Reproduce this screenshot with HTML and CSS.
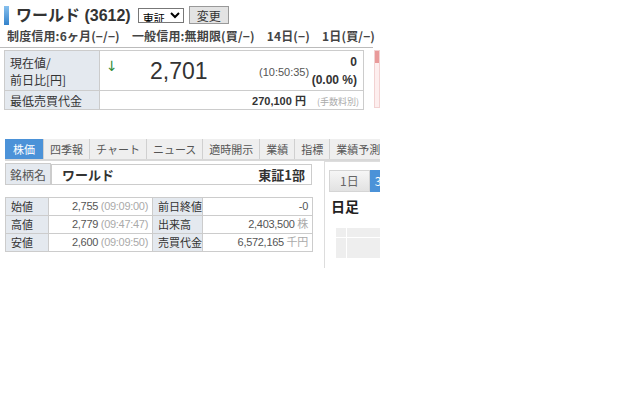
FILE: index.html
```html
<!DOCTYPE html>
<html lang="ja">
  <head>
    <meta charset="UTF-8" />
    <title>ワールド (3612)</title>
    <link rel="stylesheet" href="styles.css">
  </head>
  <body>
    <div class="frame">
      <!-- 銘柄名と市場 -->
      <div class="head">
        <h1 class="title">ワールド (3612)</h1>
        <select class="market">
          <option>東証</option>
        </select>
        <button class="change">変更</button>
      </div>
      <div class="credit">制度信用:6ヶ月(−/−)　一般信用:無期限(買/−)　14日(−)　1日(買/−)</div>

      <!-- 現在値 -->
      <div class="quote">
        <table class="price">
          <tr>
            <th class="tall">現在値/<br />前日比[円]</th>
            <td class="now">
              <span class="arrow">↓</span>
              <span class="value">2,701</span>
              <span class="time">(10:50:35)</span>
              <span class="diff">0<br />(0.00 %)</span>
            </td>
          </tr>
          <tr>
            <th>最低売買代金</th>
            <td class="min"><b>270,100 円</b><span class="note">(手数料別)</span></td>
          </tr>
        </table>
        <div class="meter"></div>
      </div>

      <!-- タブ -->
      <ul class="tabs">
        <li class="active">株価</li>
        <li>四季報</li>
        <li>チャート</li>
        <li>ニュース</li>
        <li>適時開示</li>
        <li>業績</li>
        <li>指標</li>
        <li>業績予測</li>
      </ul>

      <div class="lower">
        <div class="left">
          <table class="name">
            <tr>
              <th>銘柄名</th>
              <td><b>ワールド</b><b class="ex">東証1部</b></td>
            </tr>
          </table>
          <table class="detail">
            <colgroup>
              <col style="width: 43px" />
              <col style="width: 104px" />
              <col style="width: 50px" />
              <col style="width: 110px" />
            </colgroup>
            <tr>
              <th>始値</th>
              <td>2,755 <span class="sub">(09:09:00)</span></td>
              <th>前日終値</th>
              <td>-0</td>
            </tr>
            <tr>
              <th>高値</th>
              <td>2,779 <span class="sub">(09:47:47)</span></td>
              <th>出来高</th>
              <td>2,403,500 <span class="sub">株</span></td>
            </tr>
            <tr>
              <th>安値</th>
              <td>2,600 <span class="sub">(09:09:50)</span></td>
              <th>売買代金</th>
              <td>6,572,165 <span class="sub">千円</span></td>
            </tr>
          </table>
        </div>

        <!-- チャート -->
        <div class="chart">
          <div class="range">
            <span class="btn">1日</span>
            <span class="btn on">3</span>
          </div>
          <div class="chart-title">日足</div>
          <div class="grid">
            <span></span><span></span><span></span><span></span>
          </div>
        </div>
      </div>
    </div>
  </body>
</html>
```

FILE: styles.css
```css
body {
  margin: 0;
  background: #fff;
  font-family: "Liberation Sans", "Noto Sans CJK JP", sans-serif;
  font-size: 12px;
  color: #333;
}

.frame {
  width: 380px;
  overflow: hidden;
}

.head {
  display: flex;
  align-items: center;
  padding: 5px 0 0 4px;
  height: 20px;
}

.title {
  margin: 0;
  height: 19px;
  padding-left: 7px;
  border-left: 5px solid #3b8fd9;
  border-image: linear-gradient(#8cc4f0, #2f7fc9) 1;
  font-size: 16px;
  line-height: 19px;
  font-weight: bold;
  color: #333;
}

.market {
  margin-left: 7px;
  height: 15px;
  width: 46px;
  padding: 0;
  font-family: "Noto Sans CJK JP", sans-serif;
  font-size: 11px;
  border: 1px solid #777;
  border-radius: 0;
  background: #fff;
}

.change {
  margin-left: 5px;
  width: 40px;
  height: 18px;
  padding: 0;
  font-family: "Noto Sans CJK JP", sans-serif;
  font-size: 12px;
  color: #333;
  background: #e3e3e3;
  border: 1px solid #999;
  border-radius: 0;
}

.credit {
  width: 366px;
  padding: 4px 0 4px 7px;
  border-bottom: 1px solid #bbb;
  font-family: "Noto Sans CJK JP", sans-serif;
  font-size: 12px;
  line-height: 14px;
  font-weight: bold;
  letter-spacing: 0.15px;
  color: #444;
  white-space: nowrap;
}

.quote {
  display: flex;
  padding: 2px 0 0 4px;
}

table {
  border-collapse: collapse;
}

th {
  white-space: nowrap;
}

.price {
  width: 361px;
}

.price th,
.price td {
  border: 1px solid #ccc;
}

.price th,
.name th,
.detail th {
  background: #e4e9ef;
  font-family: "Noto Sans CJK JP", sans-serif;
  font-weight: normal;
  text-align: left;
  color: #333;
}

.price th {
  width: 84px;
  padding: 0 5px;
  font-size: 12px;
  line-height: 17px;
  height: 17px;
}

.price th.tall {
  height: 37px;
}

.now {
  position: relative;
  height: 37px;
}

.arrow {
  position: absolute;
  left: 6px;
  top: 7px;
  color: #2e8b3a;
  font-family: "DejaVu Sans", sans-serif;
  font-size: 14px;
}

.value {
  position: absolute;
  left: 50px;
  top: 7px;
  font-size: 23px;
  color: #333;
}

.time {
  position: absolute;
  left: 159px;
  top: 15px;
  font-size: 11px;
  color: #555;
}

.diff {
  position: absolute;
  right: 6px;
  top: 2px;
  font-size: 12px;
  font-weight: bold;
  line-height: 18px;
  text-align: right;
}

.min {
  text-align: right;
  padding-right: 4px;
  font-size: 11px;
}

.min b {
  font-family: "Liberation Sans", "Noto Sans CJK JP", sans-serif;
  color: #333;
}

.note {
  margin-left: 11px;
  font-family: "Noto Sans CJK JP", sans-serif;
  font-size: 9px;
  color: #aaa;
}

.meter {
  width: 4px;
  height: 56px;
  margin-left: 10px;
  border: 1px solid #f2d2d2;
  background: linear-gradient(#e99a9a 0, #e99a9a 12px, #fdeeee 12px);
}

.tabs {
  display: flex;
  margin: 29px 0 0 5px;
  padding: 0;
  list-style: none;
  border-bottom: 2px solid #d8d8d8;
}

.tabs li {
  height: 20px;
  padding: 0 6px;
  line-height: 20px;
  font-family: "Noto Sans CJK JP", sans-serif;
  font-size: 11px;
  color: #555;
  background: #efefef;
  border-right: 1px solid #d0d0d0;
  white-space: nowrap;
}

.tabs li.active {
  padding: 0 8px;
  background: #4b92d8;
  color: #fff;
}

.lower {
  display: flex;
  align-items: flex-start;
}

.left {
  margin: 2px 0 0 5px;
  width: 307px;
}

.name {
  width: 307px;
}

.name th,
.name td {
  border: 1px solid #ccc;
  height: 18px;
}

.name th {
  width: 36px;
  padding: 0 4px;
  color: #555;
}

.name td {
  display: flex;
  justify-content: space-between;
  padding: 1px 6px 0 10px;
  font-family: "Noto Sans CJK JP", sans-serif;
  font-size: 13px;
  line-height: 17px;
}

.detail {
  width: 307px;
  margin-top: 12px;
  table-layout: fixed;
}

.detail th,
.detail td {
  border: 1px solid #ccc;
  height: 17px;
  padding-top: 0;
  padding-bottom: 0;
  font-size: 11px;
  line-height: 17px;
  white-space: nowrap;
}

.detail th {
  padding-left: 5px;
  padding-right: 0;
}

.detail td {
  text-align: right;
  padding-right: 4px;
  color: #555;
  letter-spacing: -0.3px;
}

.sub {
  font-family: "Liberation Sans", "Noto Sans CJK JP", sans-serif;
  color: #aaa;
}

.chart {
  margin-left: 12px;
  width: 70px;
  height: 98px;
  padding: 8px 0 0 4px;
  border-left: 1px solid #ddd;
  border-top: 1px solid #ddd;
}

.range {
  display: flex;
  white-space: nowrap;
}

.btn {
  height: 20px;
  line-height: 20px;
  padding: 0 10px;
  font-family: "Noto Sans CJK JP", sans-serif;
  font-size: 12px;
  color: #666;
  background: linear-gradient(#f6f6f6, #e2e2e2);
  border: 1px solid #d5d5d5;
}

.btn.on {
  padding: 0 12px 0 4px;
  color: #fff;
  background: #4b92d8;
  border-color: #4b92d8;
}

.chart-title {
  margin: 5px 0 0 2px;
  font-family: "Noto Sans CJK JP", sans-serif;
  font-size: 14px;
  font-weight: bold;
  line-height: 18px;
  color: #222;
}

.grid {
  display: grid;
  grid-template-columns: 10px 40px;
  grid-template-rows: 9px 20px;
  gap: 1px;
  margin: 13px 0 0 7px;
  background: #fff;
}

.grid span {
  background: #eee;
}
```
